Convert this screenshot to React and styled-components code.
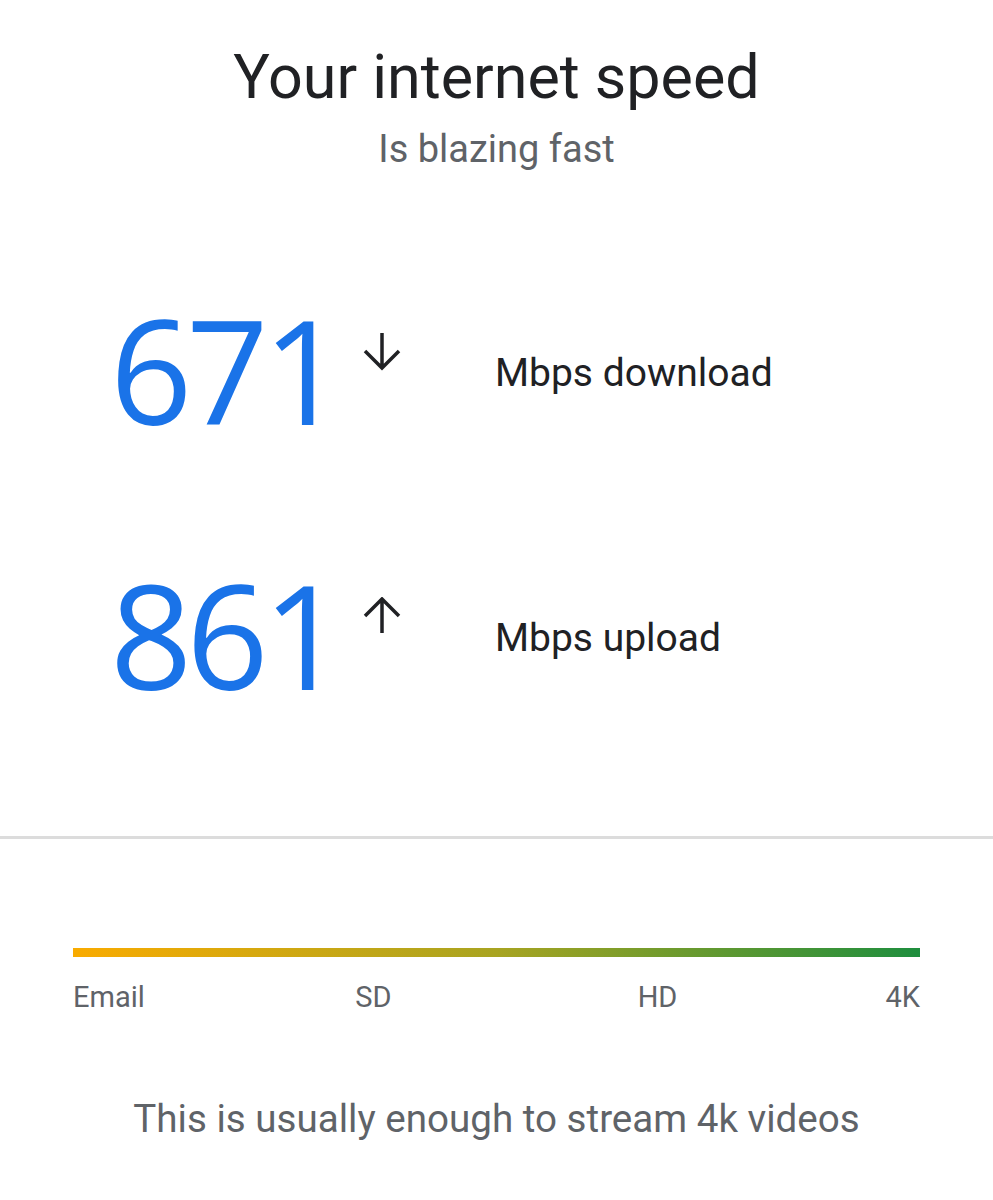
import React from "react";
import styled, { createGlobalStyle } from "styled-components";

const Global = createGlobalStyle`
  html, body { margin: 0; padding: 0; background: #fff; }
  body { font-family: Roboto, "Open Sans", sans-serif; }
`;

const Page = styled.div`
  width: 993px;
  display: flex;
  flex-direction: column;
`;

const Header = styled.header`
  display: flex;
  flex-direction: column;
  align-items: center;
  padding-top: 41px;
`;

const Title = styled.h1`
  margin: 0;
  font-family: Roboto, sans-serif;
  font-weight: 400;
  font-size: 61px;
  line-height: 72px;
  color: #202124;
`;

const Subtitle = styled.div`
  font-family: Roboto, sans-serif;
  font-size: 38px;
  line-height: 48px;
  color: #5f6368;
  margin-top: 12px;
`;

const Stats = styled.section`
  display: flex;
  flex-direction: column;
  gap: 97px;
  padding: 112px 0 118px 110px;
  border-bottom: 3px solid #dcdcdc;
`;

const StatRow = styled.div`
  display: grid;
  grid-template-columns: 252px 133px auto;
  align-items: start;
  height: 168px;
`;

const Value = styled.div`
  font-family: "Open Sans", sans-serif;
  font-size: 144px;
  line-height: 168px;
  color: #1a73e8;
  letter-spacing: -6px;
`;

const Arrow = styled.svg`
  width: 40px;
  height: 40px;
  margin-top: 47px;
`;

const Label = styled.div`
  font-family: Roboto, sans-serif;
  font-size: 39px;
  line-height: 46px;
  color: #202124;
  margin-top: 65px;
`;

const Scale = styled.section`
  padding: 109px 73px 0 73px;
  display: flex;
  flex-direction: column;
`;

const Bar = styled.div`
  height: 9px;
  background: linear-gradient(90deg, #f9ab00 0%, #a8a421 50%, #1e8e3e 100%);
`;

const Ticks = styled.div`
  display: grid;
  grid-template-columns: repeat(3, 1fr);
  margin-top: 23px;
`;

const TickEnd = styled.div`
  display: flex;
  justify-content: space-between;
`;

const Tick = styled.span`
  font-family: Roboto, sans-serif;
  font-size: 29px;
  line-height: 34px;
  color: #5f6368;
`;

const Footer = styled.p`
  margin: 82px 0 0;
  text-align: center;
  font-family: Roboto, sans-serif;
  font-size: 38.6px;
  line-height: 46px;
  color: #5f6368;
`;

const DownIcon = () => (
  <Arrow viewBox="0 0 40 40">
    <path d="M20 1 V36 M3 19 L20 36 L37 19" fill="none" stroke="#202124" strokeWidth="3.5" />
  </Arrow>
);

const UpIcon = () => (
  <Arrow viewBox="0 0 40 40">
    <path d="M20 36 V2 M3 19 L20 2 L37 19" fill="none" stroke="#202124" strokeWidth="3.5" />
  </Arrow>
);

export default function App() {
  return (
    <Page>
      <Global />
      <Header>
        <Title>Your internet speed</Title>
        <Subtitle>Is blazing fast</Subtitle>
      </Header>
      <Stats>
        <StatRow>
          <Value>671</Value>
          <DownIcon />
          <Label>Mbps download</Label>
        </StatRow>
        <StatRow>
          <Value>861</Value>
          <UpIcon />
          <Label>Mbps upload</Label>
        </StatRow>
      </Stats>
      <Scale>
        <Bar />
        <Ticks>
          <Tick>Email</Tick>
          <Tick>SD</Tick>
          <TickEnd>
            <Tick>HD</Tick>
            <Tick>4K</Tick>
          </TickEnd>
        </Ticks>
      </Scale>
      <Footer>This is usually enough to stream 4k videos</Footer>
    </Page>
  );
}
